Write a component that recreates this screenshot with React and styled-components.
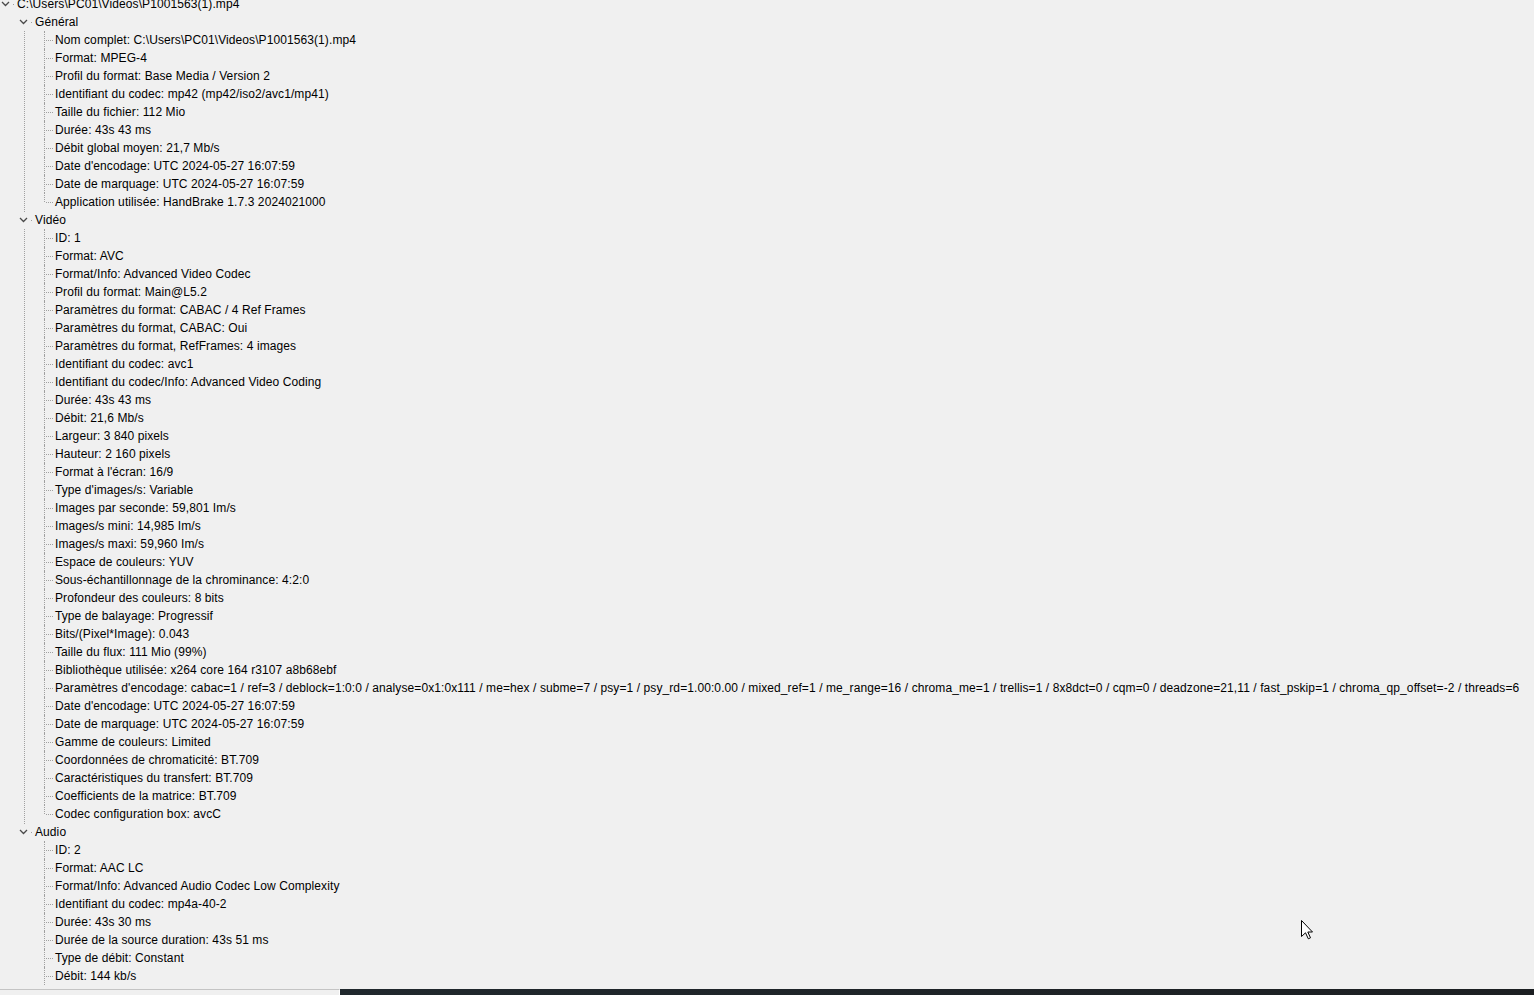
import React from "react";
import styled, { createGlobalStyle } from "styled-components";

const general = [
  "Nom complet: C:\\Users\\PC01\\Videos\\P1001563(1).mp4",
  "Format: MPEG-4",
  "Profil du format: Base Media / Version 2",
  "Identifiant du codec: mp42 (mp42/iso2/avc1/mp41)",
  "Taille du fichier: 112 Mio",
  "Durée: 43s 43 ms",
  "Débit global moyen: 21,7 Mb/s",
  "Date d'encodage: UTC 2024-05-27 16:07:59",
  "Date de marquage: UTC 2024-05-27 16:07:59",
  "Application utilisée: HandBrake 1.7.3 2024021000",
];

const video = [
  "ID: 1",
  "Format: AVC",
  "Format/Info: Advanced Video Codec",
  "Profil du format: Main@L5.2",
  "Paramètres du format: CABAC / 4 Ref Frames",
  "Paramètres du format, CABAC: Oui",
  "Paramètres du format, RefFrames: 4 images",
  "Identifiant du codec: avc1",
  "Identifiant du codec/Info: Advanced Video Coding",
  "Durée: 43s 43 ms",
  "Débit: 21,6 Mb/s",
  "Largeur: 3 840 pixels",
  "Hauteur: 2 160 pixels",
  "Format à l'écran: 16/9",
  "Type d'images/s: Variable",
  "Images par seconde: 59,801 Im/s",
  "Images/s mini: 14,985 Im/s",
  "Images/s maxi: 59,960 Im/s",
  "Espace de couleurs: YUV",
  "Sous-échantillonnage de la chrominance: 4:2:0",
  "Profondeur des couleurs: 8 bits",
  "Type de balayage: Progressif",
  "Bits/(Pixel*Image): 0.043",
  "Taille du flux: 111 Mio (99%)",
  "Bibliothèque utilisée: x264 core 164 r3107 a8b68ebf",
  "Paramètres d'encodage: cabac=1 / ref=3 / deblock=1:0:0 / analyse=0x1:0x111 / me=hex / subme=7 / psy=1 / psy_rd=1.00:0.00 / mixed_ref=1 / me_range=16 / chroma_me=1 / trellis=1 / 8x8dct=0 / cqm=0 / deadzone=21,11 / fast_pskip=1 / chroma_qp_offset=-2 / threads=6",
  "Date d'encodage: UTC 2024-05-27 16:07:59",
  "Date de marquage: UTC 2024-05-27 16:07:59",
  "Gamme de couleurs: Limited",
  "Coordonnées de chromaticité: BT.709",
  "Caractéristiques du transfert: BT.709",
  "Coefficients de la matrice: BT.709",
  "Codec configuration box: avcC",
];

const audio = [
  "ID: 2",
  "Format: AAC LC",
  "Format/Info: Advanced Audio Codec Low Complexity",
  "Identifiant du codec: mp4a-40-2",
  "Durée: 43s 30 ms",
  "Durée de la source duration: 43s 51 ms",
  "Type de débit: Constant",
  "Débit: 144 kb/s",
];

// the audio list goes on below the visible area
const sections = [
  { name: "Général", items: general },
  { name: "Vidéo", items: video },
  { name: "Audio", items: audio, continues: true },
];

const GlobalStyle = createGlobalStyle`
  html, body {
    margin: 0;
    padding: 0;
    background: #f0f0f0;
    overflow: hidden;
  }
  body {
    font-family: "Liberation Sans", Arial, sans-serif;
    font-size: 12px;
    letter-spacing: 0.09px;
    color: #000;
  }
`;

const Page = styled.div`
  position: relative;
  width: 1534px;
  height: 995px;
  display: flex;
  flex-direction: column;
  overflow: hidden;
`;

const TreeView = styled.div`
  flex: 1;
  overflow: hidden;
  white-space: nowrap;
`;

const Tree = styled.div`
  margin-top: -5px;
`;

const Row = styled.div`
  display: flex;
  align-items: center;
  height: 18px;
  line-height: 18px;
`;

const Toggle = styled.span`
  position: relative;
  z-index: 1;
  display: flex;
  align-items: center;
  justify-content: center;
  width: 10px;
  height: 16px;
  background: #f0f0f0;
`;

const Dot = styled.span`
  width: 7px;
  height: 1px;
  background: linear-gradient(
    to right,
    transparent 3px,
    #a0a0a0 3px,
    #a0a0a0 4px,
    transparent 4px
  );
`;

const Label = styled.span`
  display: block;
`;

const SectionList = styled.ul`
  list-style: none;
  margin: 0;
  padding: 0 0 0 18px;
`;

const Section = styled.li`
  position: relative;

  &:not(:last-child)::before {
    content: "";
    position: absolute;
    left: 6px;
    top: 9px;
    bottom: -9px;
    border-left: 1px dotted #a0a0a0;
  }
`;

const ItemList = styled.ul`
  list-style: none;
  margin: 0;
  padding: 0 0 0 26px;
`;

const Item = styled.li`
  position: relative;
  height: 18px;
  line-height: 18px;
  padding-left: 11px;

  &::before {
    content: "";
    position: absolute;
    left: 0;
    top: 0;
    height: ${(p) => (p.$last ? "9px" : "18px")};
    border-left: 1px dotted #a0a0a0;
  }

  &::after {
    content: "";
    position: absolute;
    left: 2px;
    top: 9px;
    width: 7px;
    border-top: 1px dotted #a0a0a0;
  }
`;

const BottomStrip = styled.div`
  display: flex;
  height: 6px;
  flex-shrink: 0;
`;

const StatusPane = styled.div`
  width: 339px;
  border-top: 1px solid #c4c4c4;
  border-right: 1px solid #ffffff;
  background: #f0f0f0;
`;

const Taskbar = styled.div`
  flex: 1;
  background: linear-gradient(to right, #20282d, #1c1f22);
`;

const Cursor = styled.svg`
  position: absolute;
  left: 1301px;
  top: 920px;
`;

const Chevron = () => (
  <svg width="9" height="6" viewBox="0 0 9 6">
    <path d="M1 1 L4.5 4.5 L8 1" fill="none" stroke="#4a4a4a" strokeWidth="1.3" />
  </svg>
);

const App = () => {
  return (
    <>
      <GlobalStyle />
      <Page>
        <TreeView>
          <Tree>
            <Row>
              <Toggle>
                <Chevron />
              </Toggle>
              <Dot />
              <Label>C:\Users\PC01\Videos\P1001563(1).mp4</Label>
            </Row>
            <SectionList>
              {sections.map((section) => (
                <Section key={section.name}>
                  <Row>
                    <Toggle>
                      <Chevron />
                    </Toggle>
                    <Dot />
                    <Label>{section.name}</Label>
                  </Row>
                  <ItemList>
                    {section.items.map((item, index) => (
                      <Item
                        key={index}
                        $last={!section.continues && index === section.items.length - 1}
                      >
                        {item}
                      </Item>
                    ))}
                  </ItemList>
                </Section>
              ))}
            </SectionList>
          </Tree>
        </TreeView>
        <BottomStrip>
          <StatusPane />
          <Taskbar />
        </BottomStrip>
        <Cursor width="13" height="20" viewBox="0 0 13 20">
          <path
            d="M0.5 0.5 L0.5 16.5 L4.5 12.8 L7.3 18.8 L9.5 17.8 L6.8 12 L11.5 12 Z"
            fill="#fff"
            stroke="#000"
            strokeWidth="1"
            strokeLinejoin="miter"
          />
        </Cursor>
      </Page>
    </>
  );
};

export default App;
